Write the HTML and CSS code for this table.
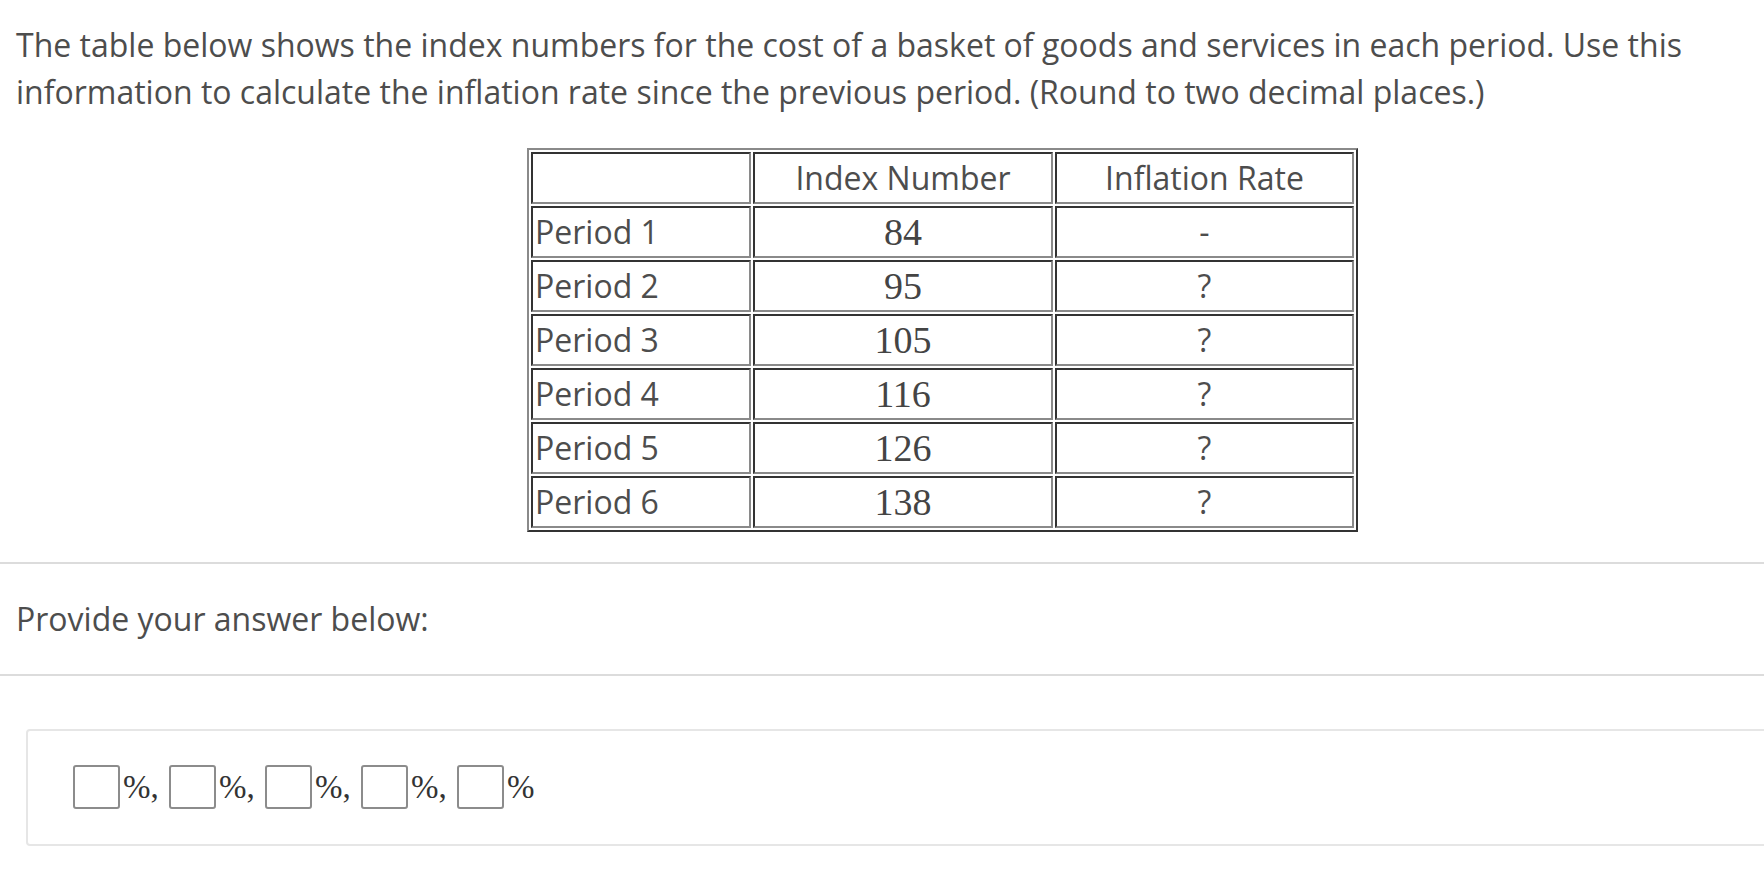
FILE: index.html
```html
<!DOCTYPE html>
<html>
<head>
<meta charset="utf-8">
<link rel="stylesheet" href="styles.css">
</head>
<body>
<div class="page">
  <section class="question">
    <p class="prompt">The table below shows the index numbers for the cost of a basket of goods and services in each period. Use this information to calculate the inflation rate since the previous period. (Round to two decimal places.)</p>
    <table class="data">
      <tr><td class="label"></td><td class="head">Index Number</td><td class="head">Inflation Rate</td></tr>
      <tr><td class="label">Period 1</td><td class="num">84</td><td class="rate">-</td></tr>
      <tr><td class="label">Period 2</td><td class="num">95</td><td class="rate">?</td></tr>
      <tr><td class="label">Period 3</td><td class="num">105</td><td class="rate">?</td></tr>
      <tr><td class="label">Period 4</td><td class="num">116</td><td class="rate">?</td></tr>
      <tr><td class="label">Period 5</td><td class="num">126</td><td class="rate">?</td></tr>
      <tr><td class="label">Period 6</td><td class="num">138</td><td class="rate">?</td></tr>
    </table>
  </section>
  <section class="provide">
    <div class="provide-text">Provide your answer below:</div>
  </section>
  <section class="answer-wrap">
    <div class="answer">
      <span class="box"></span><span class="unit">%, </span><span class="box"></span><span class="unit">%, </span><span class="box"></span><span class="unit">%, </span><span class="box"></span><span class="unit">%, </span><span class="box"></span><span class="unit">%</span>
    </div>
  </section>
</div>
</body>
</html>
```

FILE: styles.css
```css
html, body {
  margin: 0;
  padding: 0;
  background: #fff;
  overflow: hidden;
}
.page {
  width: 1764px;
  font-family: "Open Sans", "DejaVu Sans", sans-serif;
  color: #4d4d4d;
}
.question {
  padding: 21px 16px 30px 16px;
  border-bottom: 2px solid #dcdcdc;
}
.prompt {
  margin: 0 0 33px 0;
  font-size: 32px;
  line-height: 47px;
}
.data {
  margin-left: 511px;
  border-collapse: separate;
  border-spacing: 2px;
  border-style: solid;
  border-width: 2px;
  border-color: #8a8a8a #333 #333 #8a8a8a;
}
.data td {
  border-style: solid;
  border-width: 2px;
  border-color: #333 #8a8a8a #8a8a8a #333;
  height: 48px;
  padding: 0 2px;
  font-size: 32px;
  line-height: 48px;
  color: #4d4d4d;
}
.data td.label { width: 212px; text-align: left; }
.data td.head { text-align: center; }
.data td:nth-child(2) { width: 292px; }
.data td:nth-child(3) { width: 291px; }
.data td.num {
  text-align: center;
  font-family: "Liberation Serif", "Times New Roman", serif;
  font-size: 38px;
  color: #444;
}
.data td.rate { text-align: center; }
.provide {
  border-bottom: 2px solid #dcdcdc;
  padding: 31px 16px 32px 16px;
}
.provide-text {
  font-size: 32px;
  line-height: 47px;
}
.answer-wrap {
  padding: 53px 0 0 26px;
}
.answer {
  width: 1800px;
  border: 2px solid #e6e6e6;
  border-radius: 4px;
  padding: 34px 0 35px 45px;
  display: flex;
  align-items: center;
  font-family: "Liberation Serif", "Times New Roman", serif;
  font-size: 33px;
  color: #333;
}
.box {
  display: inline-block;
  width: 43px;
  height: 40px;
  border: 2px solid #8c8c8c;
  border-radius: 3px;
  background: #fff;
}
.unit {
  white-space: pre;
  line-height: 44px;
  padding: 0 2px 0 3px;
}
```
